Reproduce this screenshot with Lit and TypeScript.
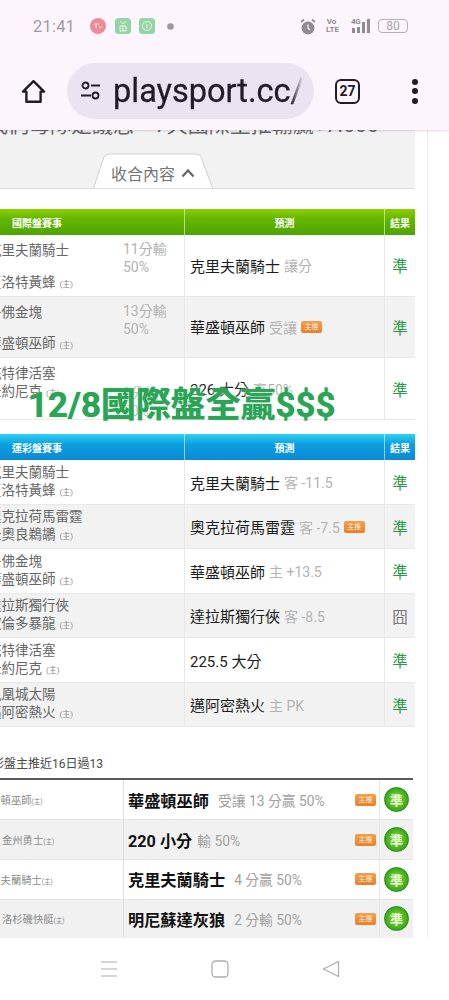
import { LitElement, html, css } from "lit";
import { customElement } from "lit/decorators.js";

const intl = [
  { a: "克里夫蘭騎士", b: "夏洛特黃蜂", s1: "11分輸", s2: "50%", p: "克里夫蘭騎士", q: "讓分", tag: false, wide: true, low: false },
  { a: "丹佛金塊", b: "華盛頓巫師", s1: "13分輸", s2: "50%", p: "華盛頓巫師", q: "受讓", tag: true, wide: true, low: false },
  { a: "底特律活塞", b: "紐約尼克", s1: "9分輸", s2: "50%", p: "226 大分", q: "贏50%", tag: false, wide: false, low: true },
];
const lot = [
  { a: "克里夫蘭騎士", b: "夏洛特黃蜂", p: "克里夫蘭騎士", q: "客 -11.5", tag: false, r: "準" },
  { a: "奧克拉荷馬雷霆", b: "紐奧良鵜鶘", p: "奧克拉荷馬雷霆", q: "客 -7.5", tag: true, r: "準" },
  { a: "丹佛金塊", b: "華盛頓巫師", p: "華盛頓巫師", q: "主 +13.5", tag: false, r: "準" },
  { a: "達拉斯獨行俠", b: "波倫多暴龍", p: "達拉斯獨行俠", q: "客 -8.5", tag: false, r: "囧" },
  { a: "底特律活塞", b: "紐約尼克", p: "225.5 大分", q: "", tag: false, r: "準" },
  { a: "鳳凰城太陽", b: "邁阿密熱火", p: "邁阿密熱火", q: "主 PK", tag: false, r: "準" },
];
const top = [
  { n: "華盛頓巫師", x: -8, p: "華盛頓巫師", q: "受讓 13 分贏 50%", gap: 9 },
  { n: "金州勇士", x: 14, p: "220 小分", q: "輸 50%", gap: 5 },
  { n: "克里夫蘭騎士", x: -8, p: "克里夫蘭騎士", q: "4 分贏 50%", gap: 9 },
  { n: "洛杉磯快艇", x: 14, p: "明尼蘇達灰狼", q: "2 分輸 50%", gap: 9 },
];

@customElement("app-root")
export class AppRoot extends LitElement {
  static styles = css`
    :host { display: block; width: 449px; height: 1000px; overflow: hidden; font-family: Roboto, "Noto Sans CJK TC", "Noto Sans CJK SC", sans-serif; background: #fff; }
    .page { height: 1000px; display: flex; flex-direction: column; }

    .chrome { height: 130px; flex: none; background: #fdf5fd; position: relative; z-index: 2; box-shadow: 0 1px 2px rgba(0,0,0,.14); display: flex; flex-direction: column; }
    .status { height: 52px; display: flex; align-items: center; padding: 0 41px 0 33px; box-sizing: border-box; color: #a09aa3; }
    .time { font-size: 16.5px; width: 57px; letter-spacing: .2px; margin-top: 1px; }
    .notes { display: flex; align-items: center; gap: 8.5px; }
    .dot { margin-left: 3.5px; }
    .spacer { flex: 1; }
    .sys { display: flex; align-items: center; color: #8f8a93; }
    .alarm { margin-right: 10px; }
    .volte { font-size: 8px; line-height: 8px; font-weight: 700; text-align: center; width: 11px; margin-right: 12px; }
    .net { font-size: 8px; font-weight: 700; line-height: 8px; letter-spacing: -.3px; position: absolute; left: 2px; top: 0; }
    .sig { position: relative; width: 24px; height: 16px; display: block; margin-right: 5px; }
    .batt { width: 30px; height: 14px; border: 1.2px solid #b5b0b8; border-radius: 4px; box-sizing: border-box; font-size: 12px; line-height: 12px; text-align: center; color: #a8a3ab; }
    .toolbar { flex: 1; display: flex; align-items: center; padding: 0 0 0 21px; }
    .home { width: 25px; height: 25px; flex: none; margin-right: 21px; }
    .omni { width: 247px; height: 56px; border-radius: 28px; background: #ebe4f0; display: flex; align-items: center; box-sizing: border-box; padding-left: 13px; overflow: hidden; flex: none; }
    .tune { width: 21px; height: 20px; flex: none; margin-right: 12px; }
    .url { font-size: 32.5px; font-weight: 400; -webkit-text-stroke: .3px #211c26; color: #211c26; width: 190px; overflow: hidden; white-space: nowrap; line-height: 56px; -webkit-mask-image: linear-gradient(90deg, #000 178px, transparent 190px); mask-image: linear-gradient(90deg, #000 178px, transparent 190px); }
    .tabs { width: 25px; height: 25px; box-sizing: border-box; border: 2.5px solid #211c26; border-radius: 6px; margin-left: 21px; font-size: 14px; font-weight: 700; color: #211c26; display: flex; align-items: center; justify-content: center; flex: none; }
    .dots { margin-left: 52px; display: flex; flex-direction: column; gap: 3.5px; flex: none; }
    .dots i { width: 6px; height: 6px; border-radius: 50%; background: #211c26; display: block; }

    .main { flex: 1; min-height: 0; position: relative; overflow: hidden; }
    .rail { width: 428px; height: 100%; box-sizing: border-box; border-right: 1px solid #ececec; }
    .canvas { margin-left: -12px; width: 427px; }

    .panel { height: 59px; box-sizing: border-box; background: #f2f2f2; border-bottom: 1px solid #dcdcdc; margin-bottom: 20px; display: flex; flex-direction: column; align-items: flex-start; }
    .peek { font-size: 21px; line-height: 24px; height: 24px; margin: -17px 0 0 -1px; color: #666; white-space: nowrap; flex: none; }
    .tab { position: relative; width: 120px; height: 35px; margin: 16px 0 0 105px; display: flex; align-items: center; justify-content: center; font-size: 16px; color: #747474; gap: 6px; padding-top: 4px; box-sizing: border-box; flex: none; }
    .tab svg.bg { position: absolute; left: 0; top: 0; width: 120px; height: 35px; }
    .tab span, .tab svg.chev { position: relative; }

    .tbl { display: grid; grid-template-columns: 197px 200px 30px; }
    .tbl > div { box-sizing: border-box; display: flex; align-items: center; min-width: 0; }
    .th { color: #fff; font-size: 10px; font-weight: 700; justify-content: center; border-right: 1px solid rgba(255,255,255,.55); height: 26px; }
    .th.lead { padding-right: 98px; }
    .th.last { border-right: 0; }
    .green .th { background: linear-gradient(#8fd000, #66b800 35%, #4da400); }
    .blue .th { background: linear-gradient(#2fd0f2, #0d9fe0 40%, #0a8ad6); height: 26.5px; }
    .td { border-bottom: 1px solid #e8e8e8; border-right: 1px solid #e8e8e8; }
    .td.odd { background: #f2f2f2; }
    .tall { height: 61.67px; }
    .short { height: 44.5px; }
    .teams { font-size: 13.5px; line-height: 18px; color: #666; white-space: nowrap; }
    .vs { display: flex; flex-direction: column; }
    .tall .vs { width: 135px; height: 100%; padding: 6px 0 2px; box-sizing: border-box; justify-content: space-between; }
    .tall.tight .vs { justify-content: flex-start; }
    .home-mark { font-size: 8px; color: #8a8a8a; margin-left: 4px; }
    .score { font-size: 14px; line-height: 18px; color: #b2b2b2; align-self: flex-start; padding-top: 5px; }
    .score.low { padding-top: 26px; }
    .pred { padding-left: 5px; font-size: 15px; color: #1d1d1d; white-space: nowrap; gap: 4px; }
    .pred em { font-style: normal; font-size: 14px; color: #b2b2b2; }
    .res { justify-content: center; font-size: 15.5px; color: #2a9a4a; border-right: 0 !important; }
    .res.fail { color: #777; }
    .tag { display: inline-flex; align-items: center; justify-content: center; width: 21px; height: 12px; border-radius: 2px; background: linear-gradient(#f3a050, #e8802c); color: #fff0d8; font-size: 7px; line-height: 12px; flex: none; }

    .gap-a { height: 14px; }
    .gap-b { height: 28px; }
    .title { font-size: 12px; line-height: 18px; color: #4a4a4a; margin: 0 0 5px -8px; white-space: nowrap; }
    .rank { display: grid; grid-template-columns: 136px 256px 33px; border-top: 2px solid #5a5a5a; width: 425px; }
    .rank > div { height: 39.7px; box-sizing: border-box; border-bottom: 1px solid #e2e2e2; display: flex; align-items: center; min-width: 0; }
    .rank .alt { background: #f1f1f1; }
    .mini { font-size: 10.3px; color: #8a8a8a; white-space: nowrap; border-right: 1px solid #dedede; }
    .mini small { font-size: 6.5px; }
    .big { padding-left: 4px; border-right: 1px solid #e8e8e8; white-space: nowrap; }
    .big b { font-size: 16.2px; color: #111; font-weight: 700; }
    .big em { font-style: normal; font-size: 13.8px; color: #a0a0a0; }
    .big .tag { margin-left: auto; margin-right: 3px; }
    .orb { justify-content: center; }
    .orb span { width: 25px; height: 25px; border-radius: 50%; box-sizing: border-box; border: 1.5px solid #1d8a1d; background: radial-gradient(circle, #7ccf3a 20%, #3ba716 70%); color: #eaffd8; font-size: 13px; font-weight: 700; display: flex; align-items: center; justify-content: center; }

    .banner { position: absolute; left: 28px; top: 254px; font-size: 34.9px; line-height: 44px; font-weight: 700; color: #2ca457; white-space: nowrap; text-shadow: 0 0 1px #2ca457, 0 0 4px rgba(255,255,255,.9); }

    .nav { height: 62px; flex: none; background: #fff; display: flex; align-items: center; gap: 93px; padding-left: 100px; box-sizing: border-box; color: #adadad; position: relative; z-index: 1; }
    .nav svg { width: 18px; height: 18px; display: block; }
  `;

  private mark() {
    return html`<span class="home-mark">(主)</span>`;
  }

  render() {
    return html`
      <div class="page">
        <header class="chrome">
          <div class="status">
            <span class="time">21:41</span>
            <div class="notes">
              <svg width="16" height="16" viewBox="0 0 16 16"><circle cx="8" cy="8" r="8" fill="#ec8c98"/><path d="M4 6h5M6 6v4M9 9h3" stroke="#fbe0e4" stroke-width="1.2" fill="none"/></svg>
              <svg width="16" height="16" viewBox="0 0 16 16"><rect width="16" height="16" rx="3.5" fill="#93d6a4"/><path d="M5 3l3 3 3-3M5 8h6v5H5zM8 8v5" stroke="#e6f7ea" fill="none"/></svg>
              <svg width="16" height="16" viewBox="0 0 16 16"><rect width="16" height="16" rx="3.5" fill="#93d6a4"/><circle cx="8" cy="8" r="4.5" stroke="#e6f7ea" fill="none"/><path d="M8 5.5v5" stroke="#e6f7ea"/></svg>
              <svg class="dot" width="7" height="7" viewBox="0 0 7 7"><circle cx="3.5" cy="3.5" r="3.3" fill="#9c979f"/></svg>
            </div>
            <span class="spacer"></span>
            <div class="sys">
              <svg class="alarm" width="16" height="17" viewBox="0 0 16 17"><circle cx="8" cy="10" r="6.5" fill="#8f8a93"/><path d="M1 4l3-2.5M15 4l-3-2.5" stroke="#8f8a93" stroke-width="1.8"/><path d="M8 6.5V10l2 2" stroke="#fdf5fd" stroke-width="1.2" fill="none"/></svg>
              <span class="volte">Vo<br />LTE</span>
              <span class="sig">
                <span class="net">4G</span>
                <svg width="24" height="16" viewBox="0 0 24 16"><rect x="3" y="10" width="3" height="5" fill="#8f8a93"/><rect x="8" y="9" width="3" height="6" fill="#8f8a93"/><rect x="13" y="4" width="3" height="11" fill="#8f8a93"/><rect x="18" y="1" width="3" height="14" fill="#8f8a93"/></svg>
              </span>
              <span class="batt">80</span>
            </div>
          </div>
          <div class="toolbar">
            <svg class="home" viewBox="0 0 25 25"><path d="M12.5 2.2L23 12.6h-3.4v10.2H5.4V12.6H2z" fill="none" stroke="#211c26" stroke-width="2.4" stroke-linejoin="round"/></svg>
            <div class="omni">
              <svg class="tune" viewBox="0 0 21 20">
                <circle cx="5.5" cy="4.5" r="3" fill="none" stroke="#211c26" stroke-width="1.8"/><path d="M11 4.5h9M1 14.5h10" stroke="#211c26" stroke-width="1.8"/><circle cx="15.5" cy="14.5" r="3" fill="none" stroke="#211c26" stroke-width="1.8"/>
              </svg>
              <span class="url">playsport.cc/v</span>
            </div>
            <span class="tabs">27</span>
            <div class="dots"><i></i><i></i><i></i></div>
          </div>
        </header>

        <main class="main">
          <div class="rail">
            <div class="canvas">
              <div class="panel">
                <div class="peek">我們母隊是議志，7天國際主推輸贏+7.666</div>
                <div class="tab">
                  <svg class="bg" viewBox="0 0 120 35"><path d="M0.5 35L11 4Q12 1 16 1H103Q107 1 108 4L119.5 35" fill="#fff" stroke="#cfcfcf"/></svg>
                  <span>收合內容</span>
                  <svg class="chev" width="14" height="10" viewBox="0 0 14 10"><path d="M1.5 8.5L7 2.5l5.5 6" fill="none" stroke="#666" stroke-width="2.2"/></svg>
                </div>
              </div>

              <div class="tbl green">
                <div class="th lead">國際盤賽事</div><div class="th">預測</div><div class="th last">結果</div>
                ${intl.map((r, i) => html`
                  <div class="td tall teams ${i % 2 ? "odd" : ""} ${r.wide ? "" : "tight"}">
                    <div class="vs"><span>${r.a}</span><span>${r.b}${this.mark()}</span></div>
                    <div class="score ${r.low ? "low" : ""}">${r.s1}<br />${r.s2}</div>
                  </div>
                  <div class="td tall pred ${i % 2 ? "odd" : ""}">${r.p} <em>${r.q}</em>${r.tag ? html`<span class="tag">主推</span>` : ""}</div>
                  <div class="td tall res ${i % 2 ? "odd" : ""}">準</div>
                `)}
              </div>

              <div class="gap-a"></div>

              <div class="tbl blue">
                <div class="th lead">運彩盤賽事</div><div class="th">預測</div><div class="th last">結果</div>
                ${lot.map((r, i) => html`
                  <div class="td short teams ${i % 2 ? "odd" : ""}">
                    <div class="vs"><span>${r.a}</span><span>${r.b}${this.mark()}</span></div>
                  </div>
                  <div class="td short pred ${i % 2 ? "odd" : ""}">${r.p} <em>${r.q}</em>${r.tag ? html`<span class="tag">主推</span>` : ""}</div>
                  <div class="td short res ${i % 2 ? "odd" : ""} ${r.r === "囧" ? "fail" : ""}">${r.r}</div>
                `)}
              </div>

              <div class="gap-b"></div>
              <div class="title">運彩盤主推近16日過13</div>

              <div class="rank">
                ${top.map((r, i) => html`
                  <div class="mini ${i % 2 ? "alt" : ""}"><span style="margin-left:${r.x}px">${r.n}<small>(主)</small></span></div>
                  <div class="big ${i % 2 ? "alt" : ""}"><b>${r.p}</b><em style="margin-left:${r.gap}px">${r.q}</em><span class="tag">主推</span></div>
                  <div class="orb ${i % 2 ? "alt" : ""}"><span>準</span></div>
                `)}
              </div>
            </div>
          </div>
          <div class="banner">12/8國際盤全贏$$$</div>
        </main>

        <nav class="nav">
          <svg viewBox="0 0 18 18"><path d="M1 2h16M1 9h16M1 16h16" stroke="currentColor" stroke-width="1.2" fill="none"/></svg>
          <svg viewBox="0 0 18 18"><rect x="1" y="1" width="16" height="16" rx="3.5" stroke="currentColor" stroke-width="1.3" fill="none"/></svg>
          <svg viewBox="0 0 18 18"><path d="M16.5 1.5v15L1.5 9z" stroke="currentColor" stroke-width="1.2" fill="none" stroke-linejoin="round"/></svg>
        </nav>
      </div>
    `;
  }
}
